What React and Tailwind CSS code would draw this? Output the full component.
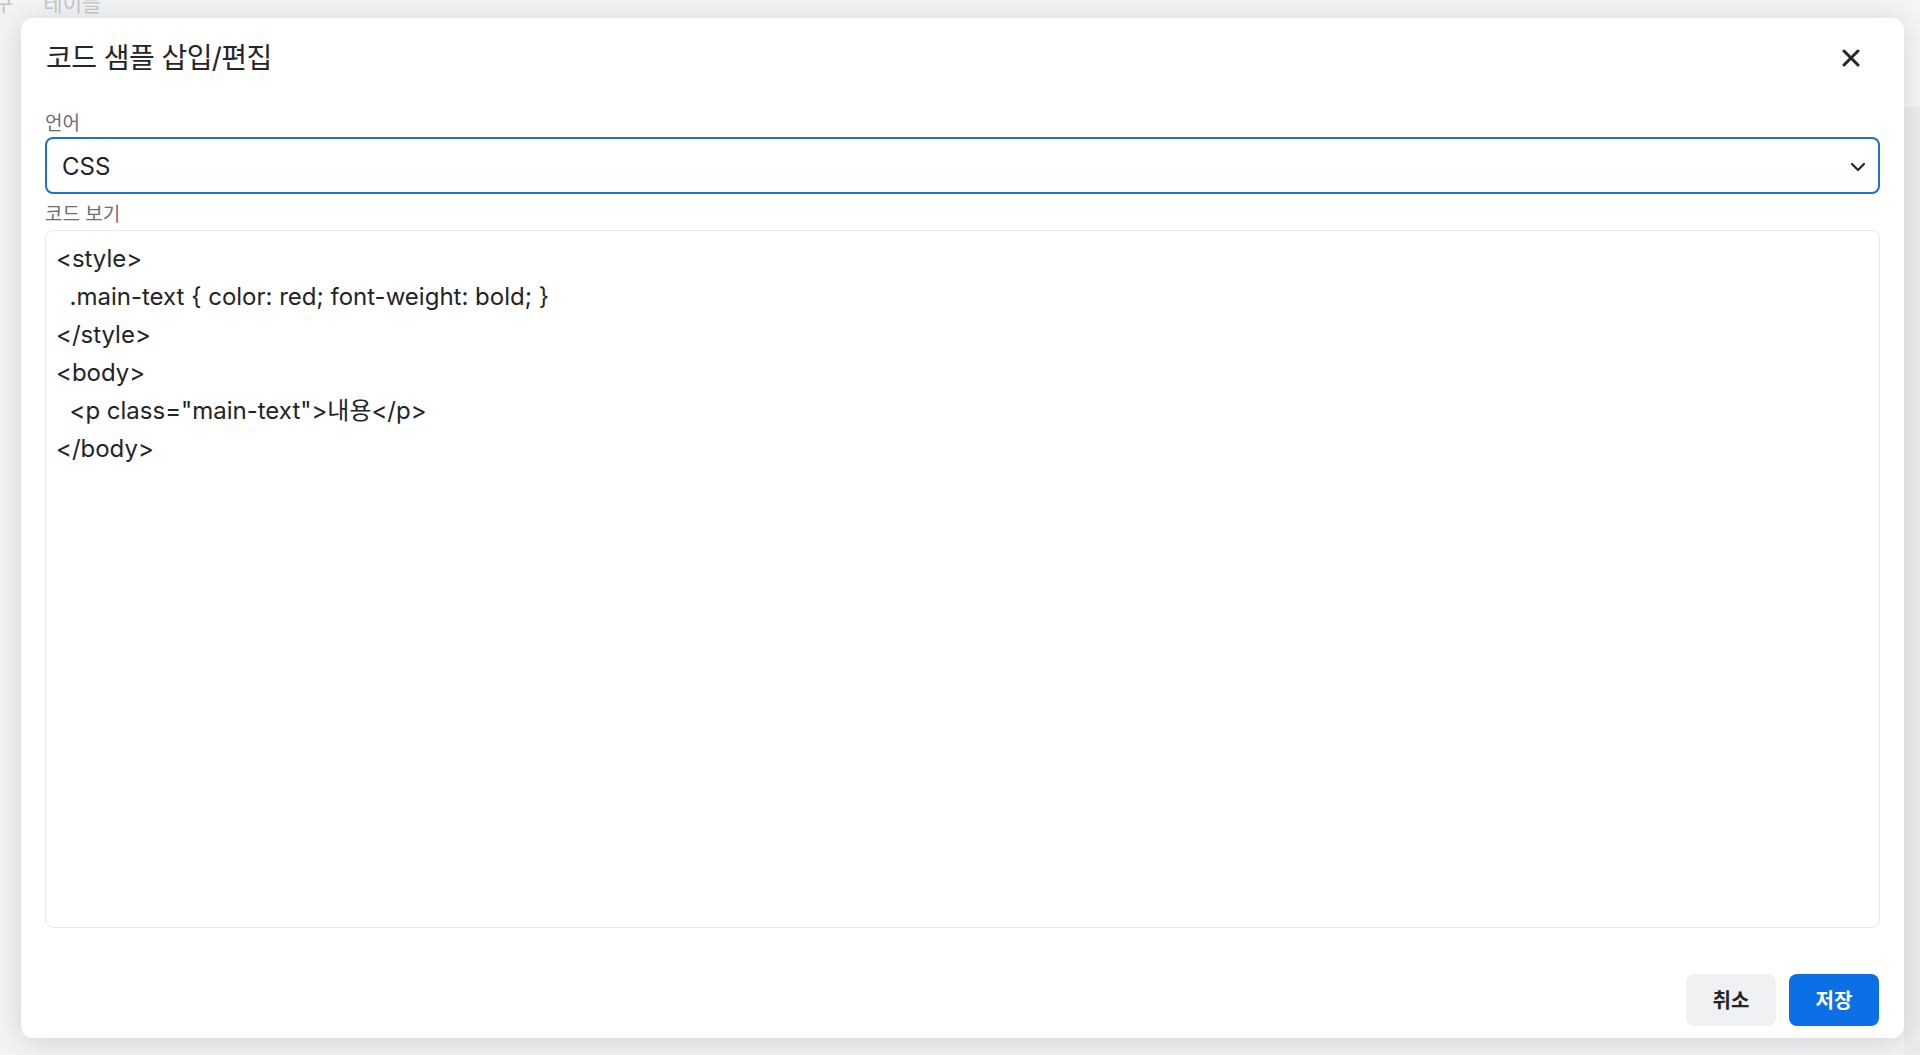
import React from "react";

const codeText = `<style>
  .main-text { color: red; font-weight: bold; }
</style>
<body>
  <p class="main-text">내용</p>
</body>`;

const sans = { fontFamily: '"Inter", "Noto Sans CJK KR", sans-serif' };

export default function App() {
  return (
    <div
      className="relative h-[1055px] w-full overflow-hidden bg-[#f2f3f4]"
      style={sans}
    >
      {/* background page */}
      <div className="flex h-full">
        <div className="flex-1 flex flex-col">
          <div className="h-[18px] overflow-hidden">
            <div className="flex gap-[30px] -mt-[8px] text-[21px] leading-[24px] text-[#c4c6c9]">
              <span className="-ml-[6px]">구</span>
              <span>테이블</span>
            </div>
          </div>
        </div>
        <div className="w-[16px] flex flex-col">
          <div className="h-[107px] bg-[#f4f5f6]" />
          <div className="flex-1 bg-[#ebecee]" />
        </div>
      </div>

      {/* modal */}
      <div className="absolute left-[21px] top-[18px] flex h-[1020px] w-[1883px] flex-col rounded-[12px] bg-white shadow-[0_4px_28px_rgba(0,0,0,0.13)]">
        <div className="flex h-[93px] items-start justify-between pl-[25px] pr-[44px] pt-[22px]">
          <h2 className="text-[28px] leading-[36px] tracking-[-0.02em] text-[#23262b]">
            코드 샘플 삽입/편집
          </h2>
          <button className="mt-[9px] flex h-[18px] w-[18px] items-center justify-center text-[#23262b]">
            <svg width="18" height="18" viewBox="0 0 18 18" fill="none">
              <path
                d="M2 2L16 16M16 2L2 16"
                stroke="currentColor"
                strokeWidth="3"
                strokeLinecap="round"
              />
            </svg>
          </button>
        </div>

        <div className="flex flex-col px-[24px]">
          <label className="h-[26px] text-[19px] leading-[26px] text-[#6b6e72]">
            언어
          </label>
          <div className="flex h-[57px] items-center justify-between rounded-[8px] border-[2.5px] border-[#1c6fdc] pl-[15px] pr-[12px]">
            <span className="mt-[2px] text-[24px] text-[#222427]">CSS</span>
            <svg width="16" height="10" viewBox="0 0 16 10" fill="none" className="mt-[2px]">
              <path
                d="M2 2L8 8L14 2"
                stroke="#23262b"
                strokeWidth="2.2"
                strokeLinecap="round"
                strokeLinejoin="round"
              />
            </svg>
          </div>
          <label className="h-[36px] pt-[8px] text-[19px] leading-[26px] text-[#6b6e72]">
            코드 보기
          </label>
          <div className="h-[698px] rounded-[8px] border border-[#e7e8ea] pl-[10px] pt-[9px]">
            <div className="whitespace-pre text-[24px] leading-[38px] text-[#222427]">
              {codeText}
            </div>
          </div>
        </div>

        <div className="mt-[46px] flex justify-end gap-[13px] pr-[25px]">
          <button className="h-[52px] w-[90px] rounded-[8px] bg-[#f0f1f2] pt-[2px] text-[20px] font-bold text-[#222427]">
            취소
          </button>
          <button className="h-[52px] w-[90px] rounded-[8px] bg-[#0b6fe6] pt-[2px] text-[20px] font-bold text-white">
            저장
          </button>
        </div>
      </div>
    </div>
  );
}
